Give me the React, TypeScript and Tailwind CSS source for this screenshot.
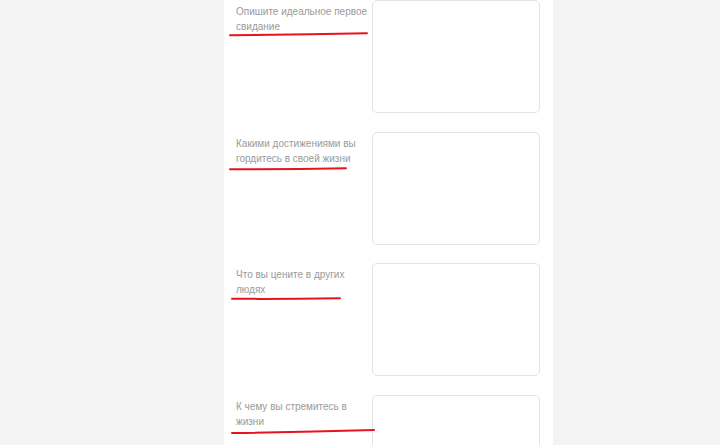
import React from "react";

const rows = [
  { label: "Опишите идеальное первое свидание", line: [6, 35.3, 143, 33.3] },
  { label: "Какими достижениями вы гордитесь в своей жизни", line: [6, 37.3, 122, 36.3] },
  { label: "Что вы цените в других людях", line: [8, 35.8, 116, 35.2] },
  { label: "К чему вы стремитесь в жизни", line: [8, 38, 150, 35] },
];

export default function App() {
  return (
    <div className="min-h-screen w-full bg-[#f3f3f3] overflow-hidden" style={{ fontFamily: '"Liberation Sans", Arial, sans-serif' }}>
      <div className="ml-[224px] w-[329px] min-h-screen bg-white flex flex-col gap-[18.5px] pl-3">
        {rows.map((r, i) => (
          <div key={i} className="relative flex">
            <div className="w-[136px] shrink-0 pt-[4px]">
              <p className="w-[136px] text-[10px] leading-[15px] text-[#9a9a9a]">{r.label}</p>
            </div>
            <div className="w-[168px] h-[113px] rounded-[5px] border border-[#e4e4e4] bg-white shrink-0" />
            <svg className="absolute top-0 pointer-events-none" width="180" height="50" style={{ left: -12 }}>
              <path
                d={`M${r.line[0]} ${r.line[1]} Q ${(r.line[0] + r.line[2]) / 2} ${(r.line[1] + r.line[3]) / 2 + 0.6} ${r.line[2]} ${r.line[3]}`}
                stroke="#e8141c"
                strokeWidth="2"
                fill="none"
                strokeLinecap="round"
              />
            </svg>
          </div>
        ))}
      </div>
    </div>
  );
}
